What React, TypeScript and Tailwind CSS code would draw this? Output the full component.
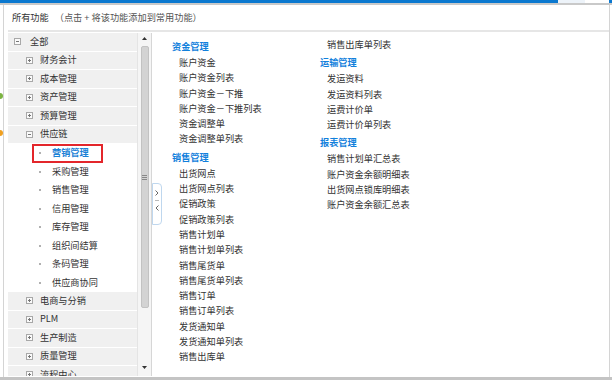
import React from 'react'

type Node = { label: string; level: 0 | 1 | 2; open?: boolean; selected?: boolean }

const tree: Node[] = [
  { label: '全部', level: 0, open: true },
  { label: '财务会计', level: 1 },
  { label: '成本管理', level: 1 },
  { label: '资产管理', level: 1 },
  { label: '预算管理', level: 1 },
  { label: '供应链', level: 1, open: true },
  { label: '营销管理', level: 2, selected: true },
  { label: '采购管理', level: 2 },
  { label: '销售管理', level: 2 },
  { label: '信用管理', level: 2 },
  { label: '库存管理', level: 2 },
  { label: '组织间结算', level: 2 },
  { label: '条码管理', level: 2 },
  { label: '供应商协同', level: 2 },
  { label: '电商与分销', level: 1 },
  { label: 'PLM', level: 1 },
  { label: '生产制造', level: 1 },
  { label: '质量管理', level: 1 },
  { label: '流程中心', level: 1 },
]

type Group = { kind: 'h' | 'i'; text: string }

const col1: Group[] = [
  { kind: 'h', text: '资金管理' },
  { kind: 'i', text: '账户资金' },
  { kind: 'i', text: '账户资金列表' },
  { kind: 'i', text: '账户资金－下推' },
  { kind: 'i', text: '账户资金－下推列表' },
  { kind: 'i', text: '资金调整单' },
  { kind: 'i', text: '资金调整单列表' },
  { kind: 'h', text: '销售管理' },
  { kind: 'i', text: '出货网点' },
  { kind: 'i', text: '出货网点列表' },
  { kind: 'i', text: '促销政策' },
  { kind: 'i', text: '促销政策列表' },
  { kind: 'i', text: '销售计划单' },
  { kind: 'i', text: '销售计划单列表' },
  { kind: 'i', text: '销售尾货单' },
  { kind: 'i', text: '销售尾货单列表' },
  { kind: 'i', text: '销售订单' },
  { kind: 'i', text: '销售订单列表' },
  { kind: 'i', text: '发货通知单' },
  { kind: 'i', text: '发货通知单列表' },
  { kind: 'i', text: '销售出库单' },
]

const col2: Group[] = [
  { kind: 'i', text: '销售出库单列表' },
  { kind: 'h', text: '运输管理' },
  { kind: 'i', text: '发运资料' },
  { kind: 'i', text: '发运资料列表' },
  { kind: 'i', text: '运费计价单' },
  { kind: 'i', text: '运费计价单列表' },
  { kind: 'h', text: '报表管理' },
  { kind: 'i', text: '销售计划单汇总表' },
  { kind: 'i', text: '账户资金余额明细表' },
  { kind: 'i', text: '出货网点锁库明细表' },
  { kind: 'i', text: '账户资金余额汇总表' },
]

function ToggleBox({ open }: { open?: boolean }) {
  return (
    <svg width="7" height="7" viewBox="0 0 7 7" className="shrink-0">
      <rect x="0.5" y="0.5" width="6" height="6" fill="#fafafa" stroke="#a8a8a8" />
      <path d="M2 3.5h3" stroke="#777" />
      {!open && <path d="M3.5 2v3" stroke="#777" />}
    </svg>
  )
}

function TreeRow({ node }: { node: Node }) {
  if (node.level === 2) {
    return (
      <div className="relative h-[18.5px] flex items-center pl-[31px] bg-white">
        <span className="w-[2px] h-[2px] bg-[#b0b0b0] shrink-0" />
        <span
          className={
            node.selected
              ? 'ml-[11px] text-[#1b82d6] font-bold'
              : 'ml-[11px] text-[#333]'
          }
        >
          {node.label}
        </span>
        {node.selected && (
          <div className="absolute left-[24px] top-0 w-[71px] h-full border-2 border-[#e3262b]" />
        )}
      </div>
    )
  }
  return (
    <div
      className={
        node.level === 0
          ? 'h-[18.5px] flex items-center pl-[6px] bg-[#f0f0f0] border-b border-white'
          : 'h-[18.5px] flex items-center pl-[18px] bg-[#f0f0f0] border-b border-white'
      }
    >
      <ToggleBox open={node.open} />
      <span className={node.level === 0 ? 'ml-[9px] text-[#333]' : 'ml-[7px] text-[#333]'}>
        {node.label}
      </span>
    </div>
  )
}

function FuncColumn({ items, className }: { items: Group[]; className?: string }) {
  return (
    <div className={className}>
      {items.map((g, i) =>
        g.kind === 'h' ? (
          <div key={i} className="h-[19px] pt-[2px] leading-[16px] font-bold text-[#1180dc]">
            {g.text}
          </div>
        ) : (
          <div key={i} className="h-[15.3px] leading-[15.3px] pl-[7px] text-[#333] whitespace-nowrap">
            {g.text}
          </div>
        )
      )}
    </div>
  )
}

export default function App() {
  return (
    <div className="relative w-[612px] h-[380px] overflow-hidden bg-white text-[9.2px] font-['Microsoft_YaHei','Noto_Sans_CJK_SC',sans-serif]">
      {/* page underneath */}
      <div className="absolute left-[-3px] top-[93px] w-[6px] h-[6px] rounded-full bg-[#7cb342]" />
      <div className="absolute left-[-3px] top-[130px] w-[6px] h-[6px] rounded-full bg-[#f0a020]" />

      {/* title strip */}
      <div className="flex h-[3px]">
        <div className="flex-1 bg-[#0b78cf]" />
        <div className="w-[27px] bg-[#edf3f9]" />
        <div className="w-[24px] bg-white" />
        <div className="w-[3px] bg-[#0b78cf]" />
      </div>
      <div className="h-[2px] bg-[#c9c9c9]" />

      <div className="ml-[3px] mr-[2px] h-[372px] border-x border-[#d4d4d4] flex flex-col">
        <div className="h-[25px] flex items-center pl-[8px] pt-[1px]">
          <span className="text-[#333]">所有功能</span>
          <span className="ml-[6px] text-[#555]">（点击 + 将该功能添加到常用功能）</span>
        </div>
        <div className="ml-[4px] h-[2px] bg-[#e6e6e6]" />

        <div className="relative flex-1 flex pt-[1px]">
          {/* tree panel */}
          <div className="ml-[4px] flex h-[343px] border-r border-[#d6d6d6]">
            <div className="w-[129px] overflow-hidden">
              {tree.map((n) => (
                <TreeRow key={n.label} node={n} />
              ))}
            </div>
            <div className="w-[14px] flex flex-col items-center bg-[#f5f5f5] border-l border-[#e4e4e4]">
              <svg width="5" height="3" viewBox="0 0 5 3" className="mt-[4px]">
                <path d="M0 3L2.5 0L5 3Z" fill="#333" />
              </svg>
              <div className="mt-[6px] w-[8px] h-[262px] rounded-[2px] bg-[#d3d3d3] border border-[#c2c2c2] flex items-center justify-center">
                <div className="flex flex-col gap-[1px]">
                  <span className="block w-[5px] h-px bg-[#888]" />
                  <span className="block w-[5px] h-px bg-[#888]" />
                  <span className="block w-[5px] h-px bg-[#888]" />
                </div>
              </div>
              <svg width="5" height="3" viewBox="0 0 5 3" className="mt-auto mb-[7px]">
                <path d="M0 0L2.5 3L5 0Z" fill="#333" />
              </svg>
            </div>
          </div>

          {/* collapse handle */}
          <div className="absolute left-[148px] top-[151px] w-[10px] h-[42px] rounded-r-[4px] border border-[#bfd7ee] bg-white flex flex-col items-center pt-[6px]">
            <svg width="4" height="6" viewBox="0 0 4 6">
              <path d="M0.5 0.5L3 3L0.5 5.5" fill="none" stroke="#666" />
            </svg>
            <span className="mt-[4px] block w-[4px] h-px bg-[#bbb]" />
            <svg width="4" height="6" viewBox="0 0 4 6" className="mt-[4px]">
              <path d="M3.5 0.5L1 3L3.5 5.5" fill="none" stroke="#666" />
            </svg>
          </div>

          {/* function lists */}
          <div className="flex pl-[20px] pt-[3px]">
            <FuncColumn items={col1} className="w-[148px]" />
            <FuncColumn items={col2} className="w-[160px] mt-[1px]" />
          </div>
        </div>
      </div>
      <div className="h-[3px] bg-[#c4c4c4]" />
    </div>
  )
}
